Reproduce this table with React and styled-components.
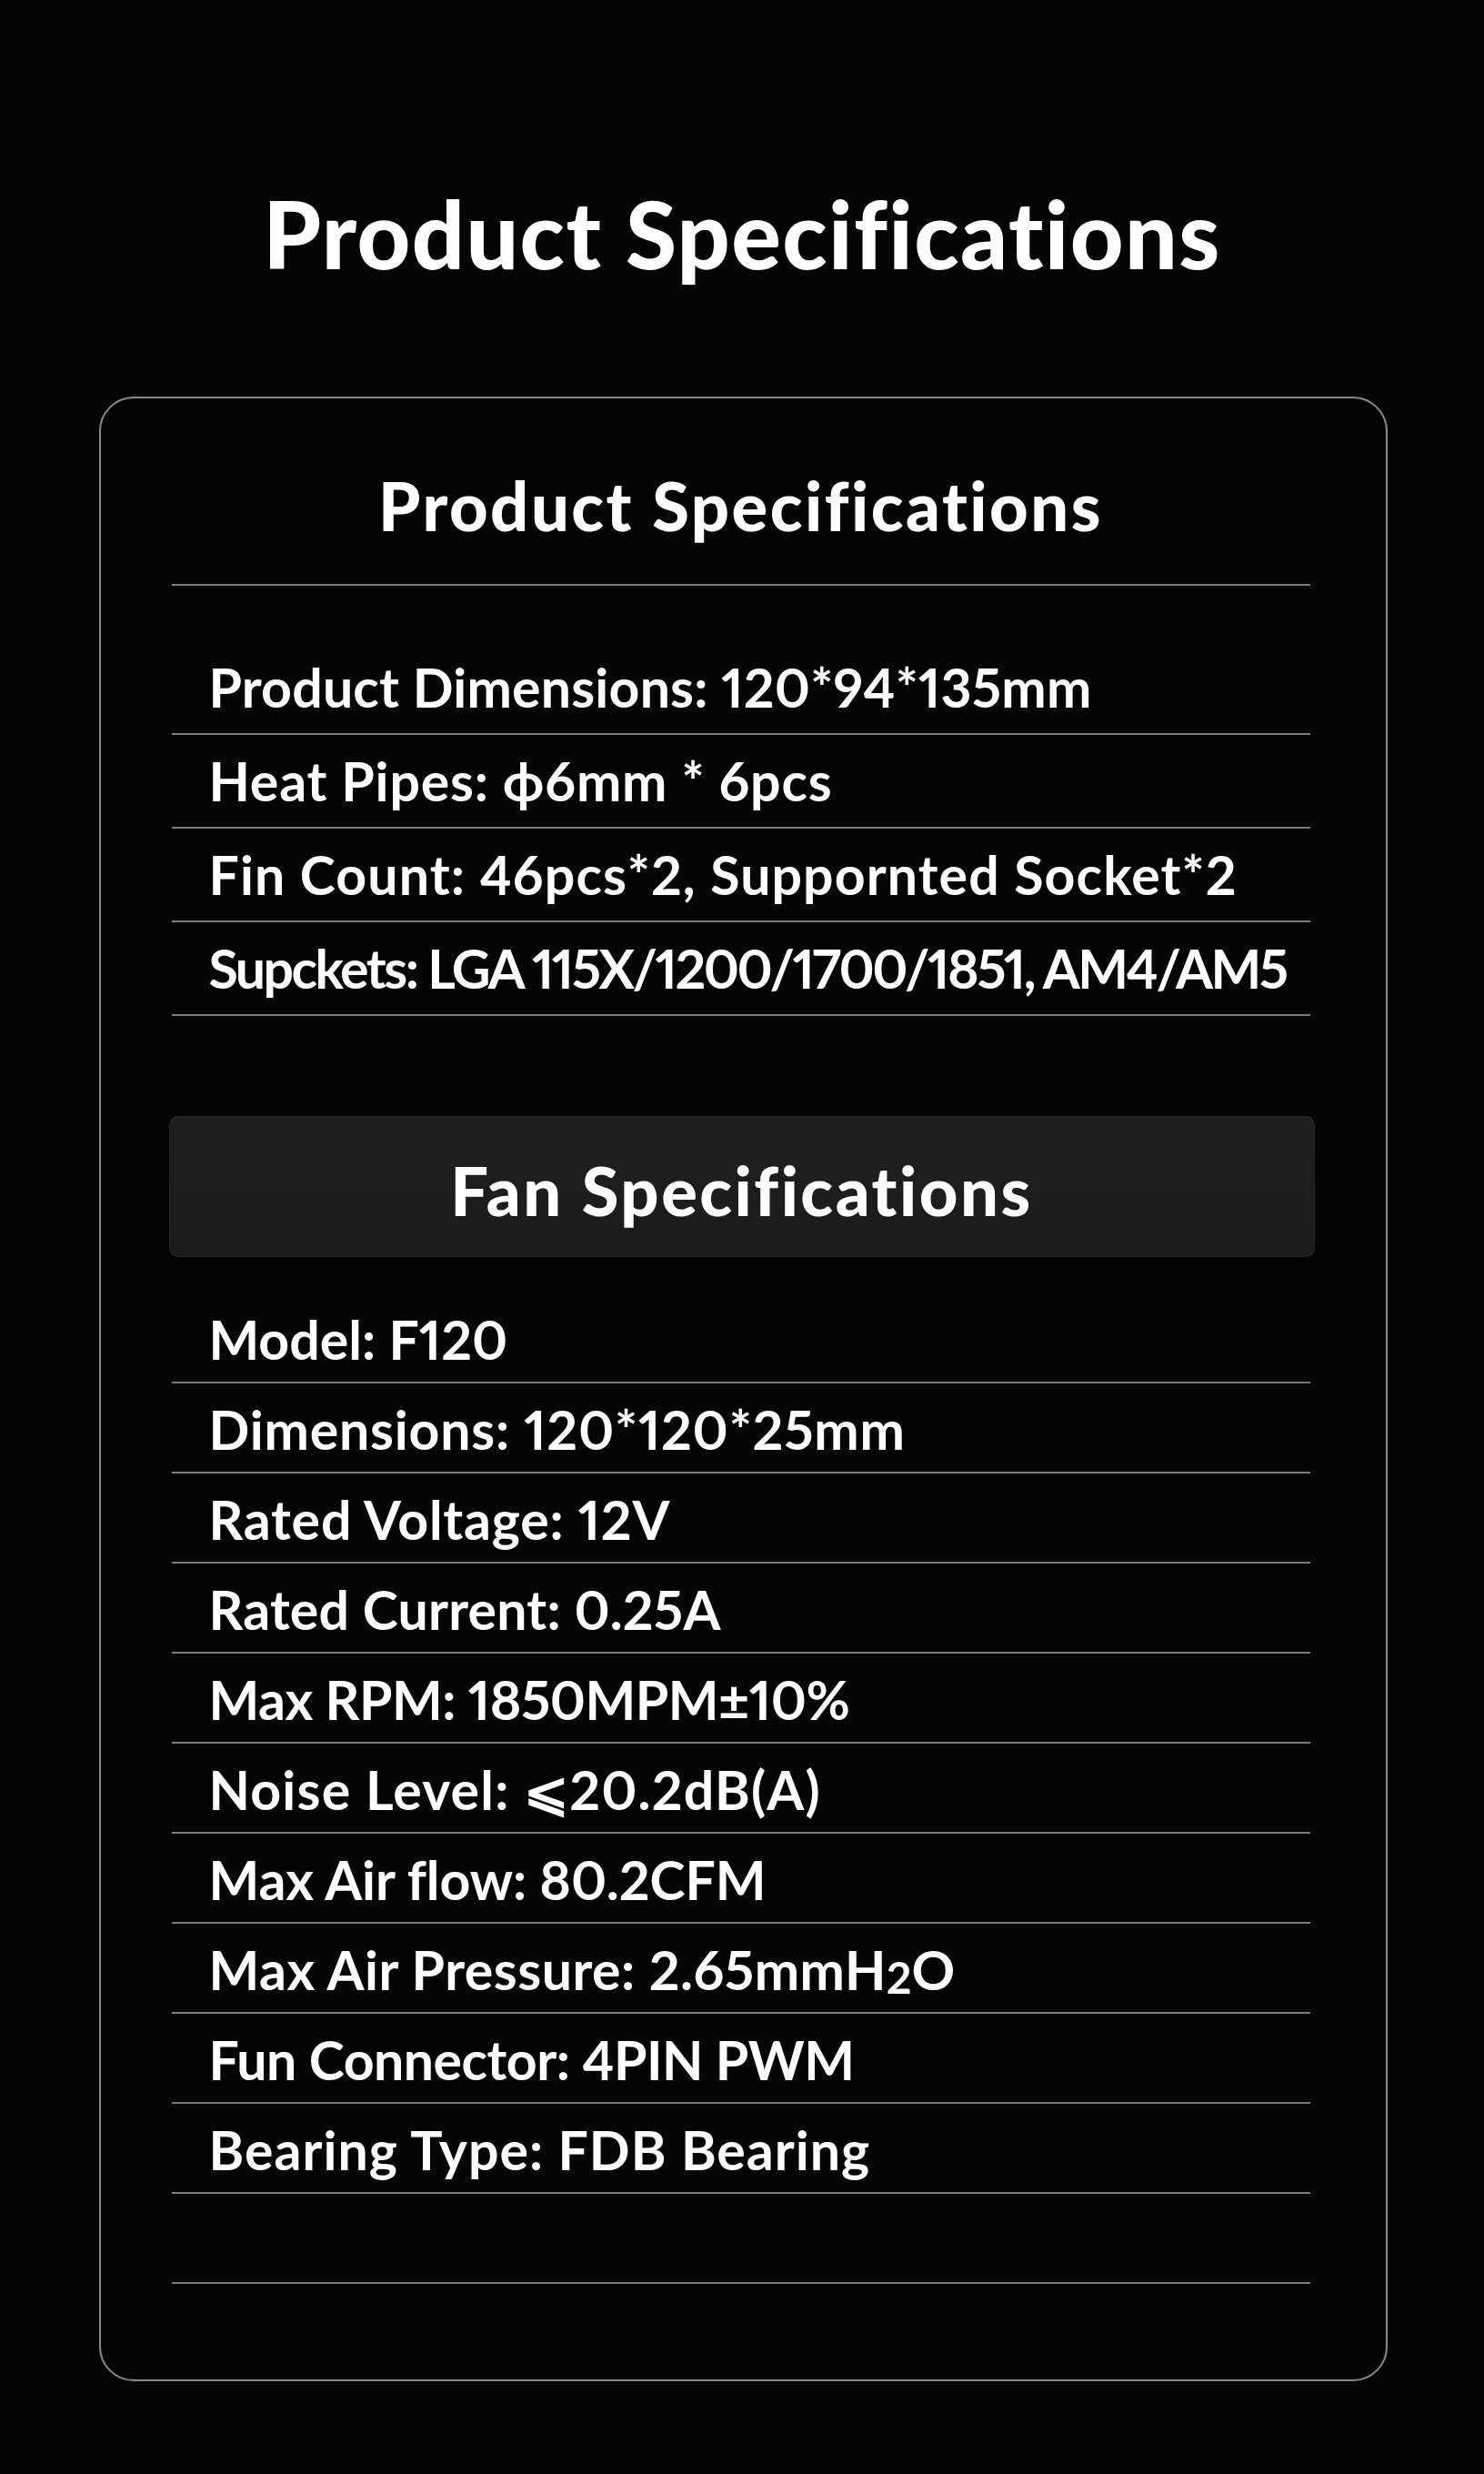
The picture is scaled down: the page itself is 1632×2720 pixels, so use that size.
import React from "react";
import styled, { createGlobalStyle } from "styled-components";

const Global = createGlobalStyle`
  html, body { margin: 0; padding: 0; background: #050505; }
  body { font-family: Lato, "Open Sans", Arial, sans-serif; color: #fff; }
`;

const Page = styled.div`
  width: 1632px;
  min-height: 2720px;
  box-sizing: border-box;
  padding-top: 196px;
  display: flex;
  flex-direction: column;
  align-items: center;
  background: #050505;
`;

const Title = styled.h1`
  margin: 0;
  font-family: Lato, sans-serif;
  font-weight: 900;
  font-size: 102px;
  letter-spacing: 1.4px;
  line-height: 1.2;
  text-align: center;
  color: #fff;
`;

const Card = styled.section`
  margin-top: 118px;
  margin-left: 2px;
  width: 1417px;
  box-sizing: border-box;
  border: 2px solid #8a8a8a;
  border-radius: 38px;
  padding: 74px 83px 105px 78px;
  display: flex;
  flex-direction: column;
`;

const SectionHeading = styled.h2`
  margin: 0;
  padding-bottom: 41px;
  border-bottom: 2px solid #7c7c7c;
  font-family: Lato, sans-serif;
  font-weight: 900;
  font-size: 74px;
  letter-spacing: 2.5px;
  line-height: 1.2;
  text-align: center;
  color: #fff;
`;

const List = styled.div`
  display: flex;
  flex-direction: column;
  margin-top: ${(p) => p.$top}px;
`;

const Row = styled.div`
  box-sizing: border-box;
  height: ${(p) => p.$h}px;
  display: flex;
  align-items: flex-end;
  padding: 0 0 ${(p) => p.$pb}px 41px;
  border-bottom: 2px solid #7c7c7c;
  font-family: Lato, sans-serif;
  font-weight: 700;
  font-size: 59px;
  letter-spacing: ${(p) => p.$ls ?? 0.8}px;
  font-variant-numeric: proportional-nums;
  line-height: 1.2;
  color: #fff;
  white-space: nowrap;
`;

const Sub = styled.span`
  font-size: 0.82em;
  letter-spacing: 0;
`;

const FanBox = styled.div`
  margin: 110px -5px 0 -3px;
  height: 155px;
  box-sizing: border-box;
  padding-top: 10px;
  border-radius: 10px;
  background: linear-gradient(180deg, #212121 0%, #1b1b1b 100%);
  box-shadow: inset 0 0 0 1px #272727;
  display: flex;
  align-items: center;
  justify-content: center;
`;

const BoxHeading = styled.h2`
  margin: 0;
  font-family: Lato, sans-serif;
  font-weight: 900;
  font-size: 74px;
  letter-spacing: 2.5px;
  line-height: 1.2;
  color: #fff;
`;

const productRows = [
  { t: "Product Dimensions: 120*94*135mm", ls: 0.2 },
  { t: "Heat Pipes: ϕ6mm * 6pcs" },
  { t: "Fin Count: 46pcs*2, Suppornted Socket*2", ls: 1.1 },
  { t: "Supckets: LGA 115X/1200/1700/1851, AM4/AM5", ls: -2.5 },
];

const fanRows = [
  { t: "Model: F120", ls: 0 },
  { t: "Dimensions: 120*120*25mm" },
  { t: "Rated Voltage: 12V" },
  { t: "Rated Current: 0.25A", ls: 0.2 },
  { t: "Max RPM: 1850MPM±10%", ls: -0.5 },
  { t: "Noise Level: ⩽20.2dB(A)", ls: 1.2 },
  { t: "Max Air flow: 80.2CFM", ls: -0.1 },
  {
    t: (
      <>
        Max Air Pressure: 2.65mmH<Sub>2</Sub>O
      </>
    ),
    ls: 0.5,
  },
  { t: "Fun Connector: 4PIN PWM", ls: -0.5 },
  { t: "Bearing Type: FDB Bearing", ls: 1 },
  { t: "\u00a0" },
];

export default function App() {
  return (
    <>
      <Global />
      <Page>
        <Title>Product Specifications</Title>
        <Card>
          <SectionHeading>Product Specifications</SectionHeading>
          <List $top={61}>
            {productRows.map((r, i) => (
              <Row key={i} $h={103} $pb={14} $ls={r.ls}>
                {r.t}
              </Row>
            ))}
          </List>
          <FanBox>
            <BoxHeading>Fan Specifications</BoxHeading>
          </FanBox>
          <List $top={40}>
            {fanRows.map((r, i) => (
              <Row key={i} $h={99} $pb={10} $ls={r.ls}>
                {r.t}
              </Row>
            ))}
          </List>
        </Card>
      </Page>
    </>
  );
}
